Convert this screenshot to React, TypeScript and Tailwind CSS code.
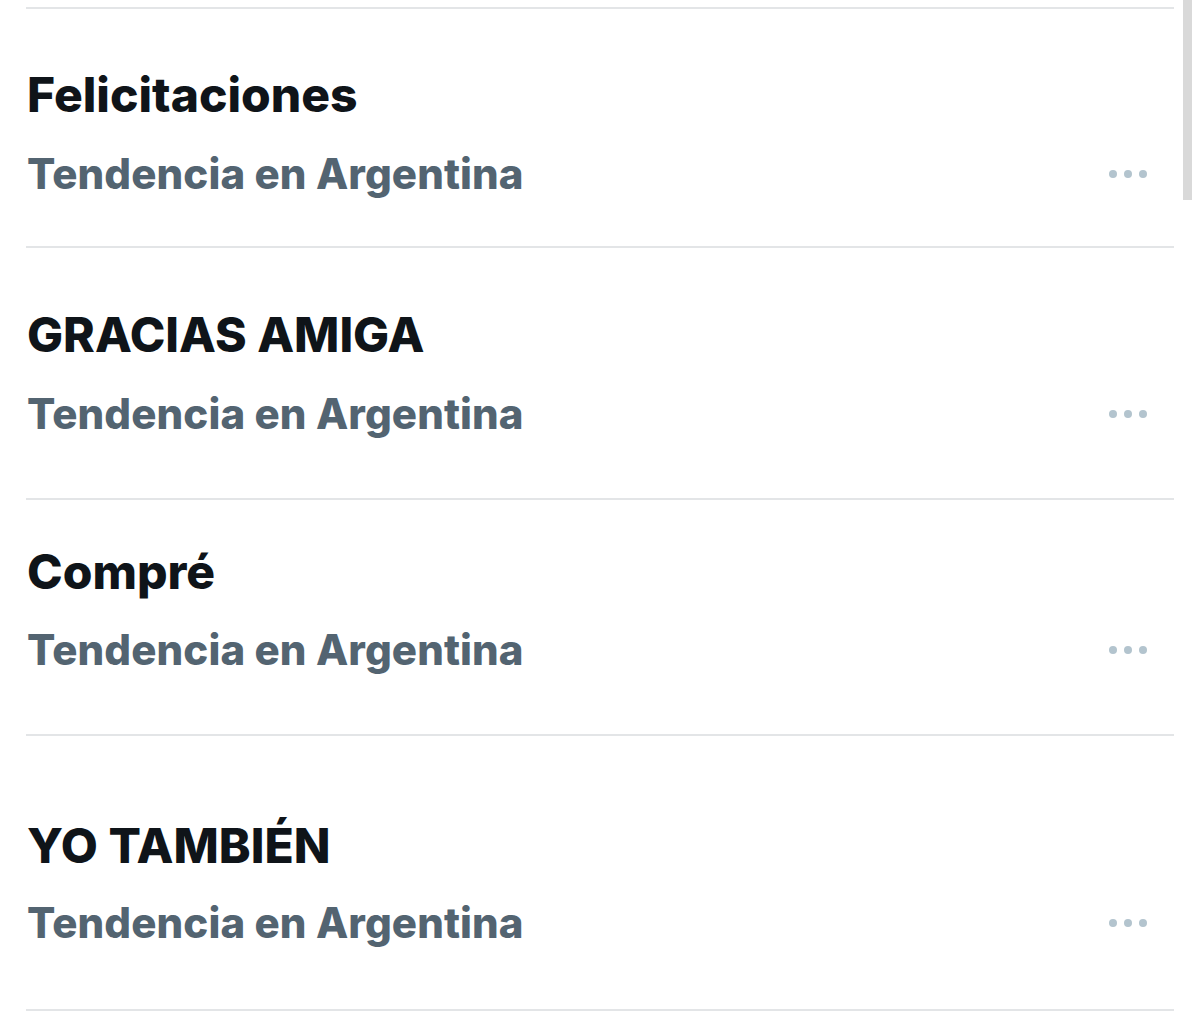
import React from 'react';

const trends = [
  { title: 'Felicitaciones', h: 'h-[239px]', pt: 'pt-[58px]', gap: 'mt-[25px]' },
  { title: 'GRACIAS AMIGA', h: 'h-[252px]', pt: 'pt-[59px]', gap: 'mt-[25px]' },
  { title: 'Compré', h: 'h-[236px]', pt: 'pt-[44px]', gap: 'mt-[24px]' },
  { title: 'YO TAMBIÉN', h: 'h-[275px]', pt: 'pt-[82px]', gap: 'mt-[23px]' },
];

function Dots() {
  return (
    <div className="flex items-center gap-[7px] pr-[27px]">
      <span className="block w-[8px] h-[8px] rounded-full bg-[#b3c4ce]" />
      <span className="block w-[8px] h-[8px] rounded-full bg-[#b3c4ce]" />
      <span className="block w-[8px] h-[8px] rounded-full bg-[#b3c4ce]" />
    </div>
  );
}

export default function App() {
  return (
    <div
      className="relative w-[1200px] h-[1011px] bg-white overflow-hidden pt-[7px]"
      style={{ fontFamily: 'Inter, "Liberation Sans", sans-serif' }}
    >
      <div className="mx-[26px] border-t-2 border-[#e3e5e7]">
        {trends.map((t) => (
          <div key={t.title} className={`${t.h} ${t.pt} border-b-2 border-[#e3e5e7]`}>
            <div className="text-[48px] leading-[56px] font-extrabold text-[#0f1419] pl-px">{t.title}</div>
            <div className={`${t.gap} flex items-center justify-between`}>
              <div className="text-[42px] leading-[52px] font-extrabold tracking-[0.1px] text-[#536471] pl-px">Tendencia en Argentina</div>
              <Dots />
            </div>
          </div>
        ))}
      </div>
      <div className="absolute top-0 right-[8px] w-[9px] h-[200px] bg-[#d9d9d9]" />
    </div>
  );
}
